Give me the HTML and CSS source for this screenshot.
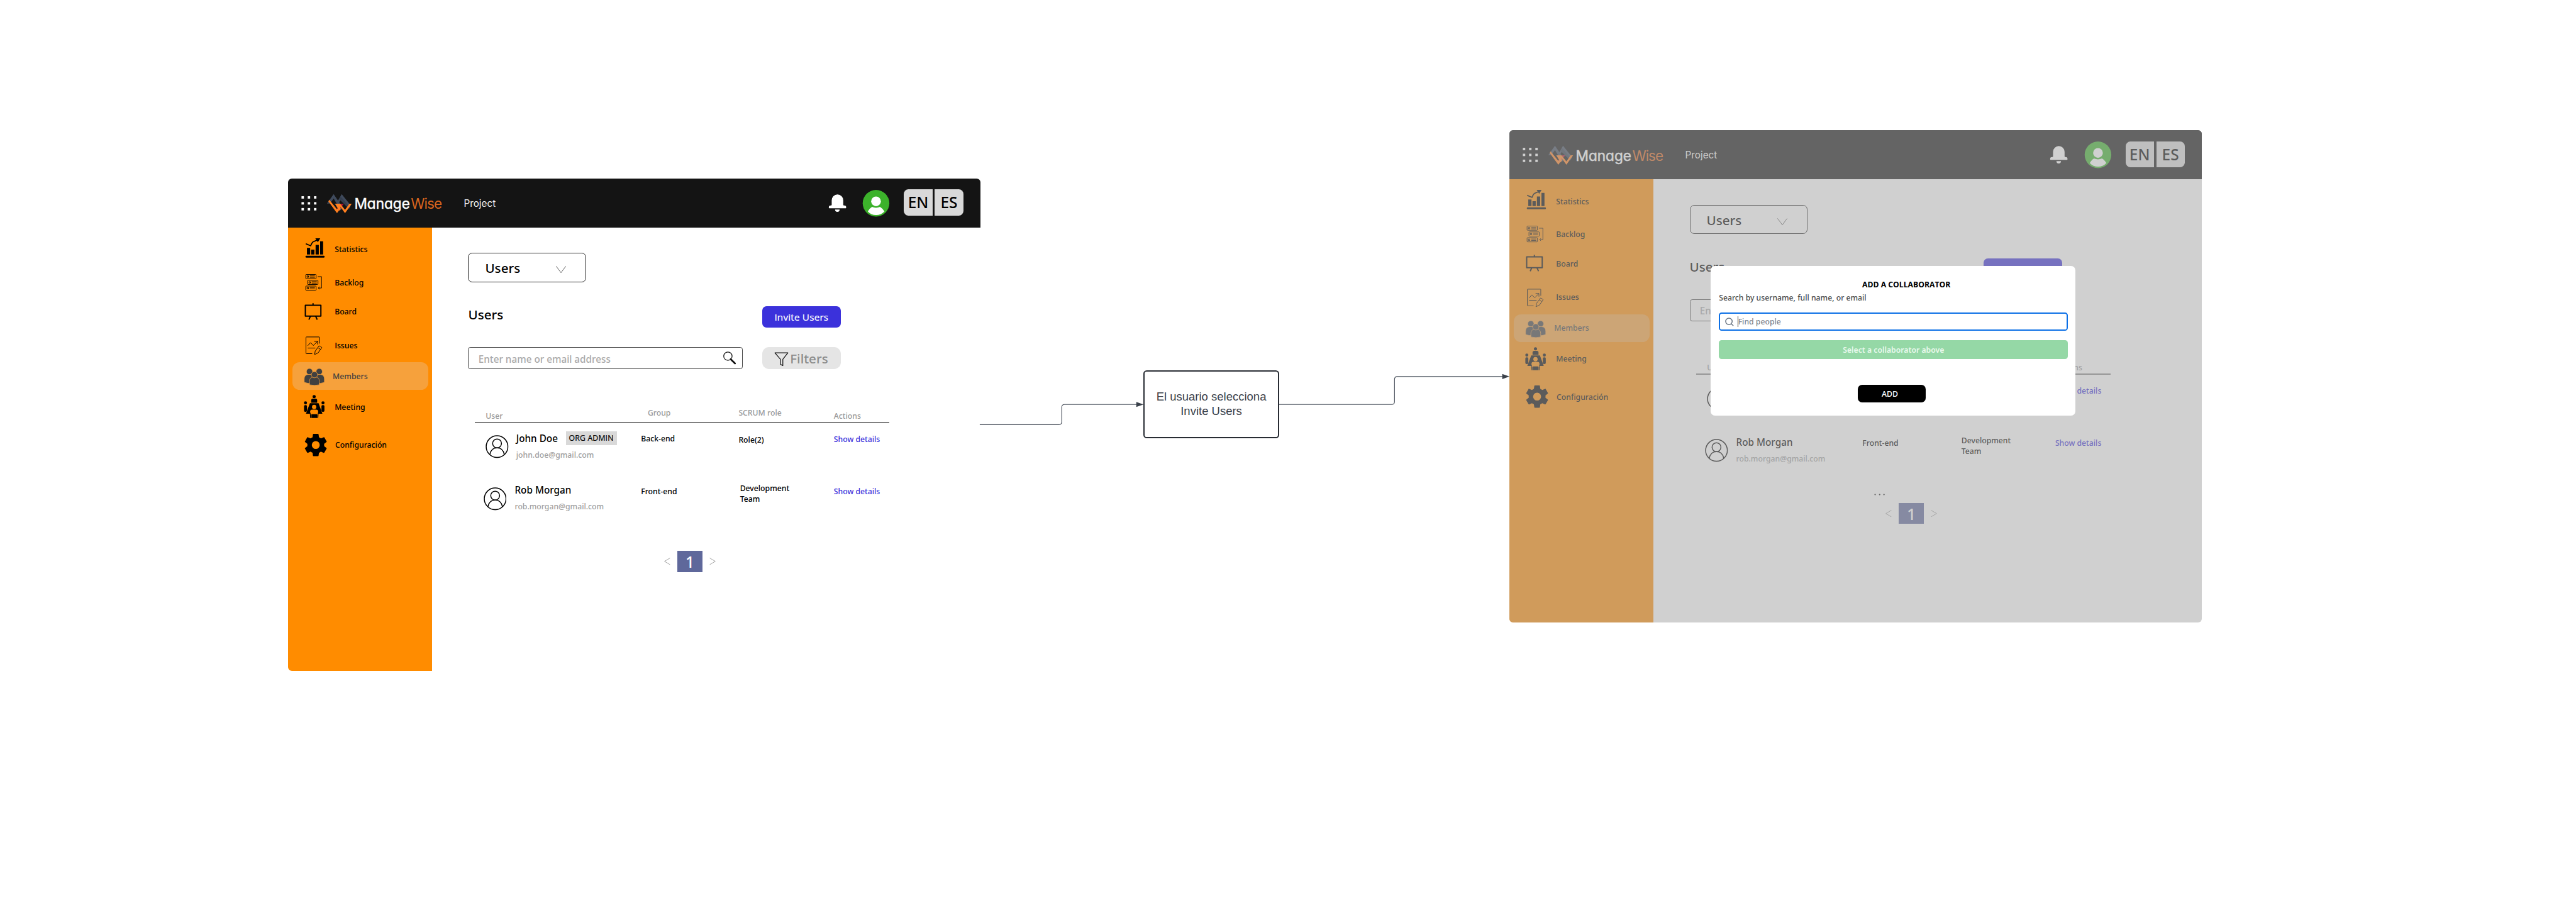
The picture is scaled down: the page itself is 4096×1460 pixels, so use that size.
FILE: index.html
```html
<!DOCTYPE html>
<html lang="es">
<head>
<meta charset="utf-8">
<title>ManageWise – Invite users flow</title>
<link rel="stylesheet" href="styles.css">
</head>
<body>
<svg class="defs" aria-hidden="true">
  <symbol id="i-dots" viewBox="0 0 74 102"><g fill="#fff"><rect x="28" y="36.7" width="5" height="5"/><rect x="41" y="36.7" width="5" height="5"/><rect x="54" y="36.7" width="5" height="5"/><rect x="28" y="49" width="5" height="5"/><rect x="41" y="49" width="5" height="5"/><rect x="54" y="49" width="5" height="5"/><rect x="28" y="61.3" width="5" height="5"/><rect x="41" y="61.3" width="5" height="5"/><rect x="54" y="61.3" width="5" height="5"/></g></symbol>
  <symbol id="i-mark" viewBox="74 0 64 102">
    <path fill="#3f4a5c" d="M80.3 52 94.3 32.3 113 60l-4 6L94.3 41.5 86.6 52z"/>
    <path fill="#3f4a5c" d="M101 50 111 32.3 130 56l-2.300 4.500L111 41 104 52z"/>
    <path fill="#343e4e" d="M105.500 42.500 109 37.500 128.500 60l-2.300 3z"/>
    <path fill="#b01638" d="M109.500 52.300h6L103.500 68l-3-4z"/>
    <path fill="#ff7f1f" d="M85.300 44 83.300 47.500 101.300 72 105.500 66 103 61.500 101.300 64z"/>
    <path fill="#ff7f1f" d="M97 52.300h11L118 65l9-12.700h5L118 72 107.500 57.500 109 63l-3 4z"/>
  </symbol>
  <symbol id="i-bell" viewBox="1115 0 60 102"><path fill="#fff" d="M1130 45a12 12 0 0 1 24 0v9.500q0 1 1.500 1.300l2.500.6q2 .5 2 2.400v2q0 1-1 1h-34q-1 0-1-1v-2q0-1.900 2-2.400l2.500-.6q1.500-.3 1.500-1.300zM1137 64.500h9.500a4.750 4.750 0 0 1-9.500 0z"/></symbol>
  <symbol id="i-user" viewBox="1175 0 106 102"><circle cx="1223.300" cy="51.300" r="27.700" fill="#3cb22b"/><circle cx="1223.300" cy="47.300" r="10.100" fill="#fff"/><path fill="#fff" d="M1206.200 68.200q3-5.500 8.800-9.200 8.300 3.400 16.600 0 5.800 3.700 9.200 9.200-7.500 7.800-17.400 7.800t-17.200-7.800z"/></symbol>
  <symbol id="i-stats" viewBox="0 121.800 90 52"><path d="M39.300 144.300H46V158h-6.700zM48 148h6.800v10H48zM57.300 138H64v20h-6.700zM66.700 130.700H73V158h-6.300zM56.700 124.300H67l-5 8.400z"/><path fill="none" stroke="currentColor" stroke-width="2.200" d="m37 135.700 10 4.300q2.500-6.500 5.500-8.500l9.500-4"/><rect x="36.300" y="160.700" width="39.700" height="4" rx="1.800"/></symbol>
  <symbol id="i-backlog" viewBox="0 196.500 90 40"><g fill="none" stroke="currentColor" stroke-width="1.200"><rect x="36.800" y="199.800" width="21.600" height="8.800" rx="1.200"/><rect x="40.700" y="211.900" width="21.600" height="8.800" rx="1.200"/><rect x="36.800" y="223.900" width="21.600" height="8.800" rx="1.200"/><path d="M39.600 202.700h3v3h-3zM43.500 214.800h3v3h-3zM39.600 226.800h3v3h-3zM45.300 202.700h10.500m-10.500 3h10.500m-6.600 9.100h10.500m-10.500 3h10.500m-14.400 9h10.500m-10.500 3h10.500M61.700 204.300h8V228h-7m3-2.500-2.800 2.500 2.800 2.500"/></g></symbol>
  <symbol id="i-board" viewBox="0 255.100 90 44"><path fill="none" stroke="currentColor" stroke-width="2.600" stroke-linejoin="round" d="M36 263.700h32.300v22.500H36zM52 259.500v4M46.500 286.500l-3.200 7M57.500 286.500l3.200 7"/></symbol>
  <symbol id="i-issues" viewBox="0 325.100 90 44"><g fill="none" stroke="currentColor" stroke-width="1.300" stroke-linejoin="round"><path d="M65.300 344v-13q0-.8-.8-.8H38.200q-.9 0-.9.900V364q0 1 1 1h12M41 348.500l5.700-6.500 6 6 8.600-8.600M54.500 339.200h7v6.500M41 353.300h15.700M55.300 366.700l1.200-7 8-11q3 .3 5.800 3.600l-7.800 11zM61.700 352l5.700 4"/></g></symbol>
  <symbol id="i-members" viewBox="9 383 81 57"><g stroke="#f6a13c" stroke-width="1"><circle cx="44.500" cy="402.500" r="6.500"/><circle cx="64.700" cy="402.500" r="6.500"/><path d="M33.500 425v-7q0-8.500 8-9.500h10v18q-10 2-18-1.500zM75.500 425v-7q0-8.500-8-9.500h-10v18q10 2 18-1.500z"/><path d="M44.500 430v-7q0-8 7-9h6.500q7 1 7 9v7q-10 2.500-20.500 0z"/><circle cx="54.800" cy="409" r="6.500"/></g></symbol>
  <symbol id="i-meeting" viewBox="0 449.500 90 52"><circle cx="54.300" cy="454.300" r="3.300"/><path d="M48.200 467v-5q0-3.300 3.300-3.300h5.800q3.300 0 3.300 3.300v5z"/><circle cx="36.300" cy="467.500" r="3.200"/><circle cx="72.700" cy="467.500" r="3.200"/><rect x="33.200" y="472" width="6.200" height="14" rx="2.500"/><rect x="69.500" y="472" width="6.200" height="14" rx="2.500"/><path d="M45.500 468h18l8 22H37.300z"/><g fill="#ff8c00"><circle cx="54.300" cy="476" r="4.500"/><path d="M46 492v-6.500q0-4 4-4h8.600q4 0 4 4v6.500z"/></g><path d="M48.700 491h11.500v8H48.700zM45.300 488h1.500v3.500l1.200.5v7h-2zM63.500 488H62v3.500l-1.200.5v7h2z"/></symbol>
  <symbol id="i-gear" viewBox="0 528.500 90 52"><path transform="translate(28.500 525.200) scale(2.430)" d="M19.140 12.940c.04-.3.060-.61.060-.94 0-.32-.02-.64-.07-.94l2.030-1.580c.18-.14.230-.41.120-.61l-1.920-3.320c-.12-.22-.37-.29-.59-.22l-2.390.96c-.5-.38-1.030-.7-1.620-.94L14.400 2.810c-.04-.24-.24-.41-.48-.41h-3.840c-.24 0-.43.170-.47.410L9.250 5.350C8.660 5.590 8.120 5.920 7.630 6.290L5.240 5.330c-.22-.08-.47 0-.59.220L2.740 8.870c-.12.210-.08.470.12.610l2.030 1.580C4.840 11.360 4.800 11.690 4.800 12s.02.640.07.940l-2.030 1.580c-.18.140-.23.410-.12.610l1.920 3.320c.12.220.37.290.59.220l2.390-.96c.5.380 1.030.7 1.620.94l.36 2.540c.05.240.24.410.48.410h3.840c.24 0 .44-.17.470-.41l.36-2.540c.59-.24 1.130-.56 1.620-.94l2.390.96c.22.080.47 0 .59-.22l1.920-3.320c.12-.22.070-.47-.12-.61zM12 15.400A3.400 3.400 0 1 1 12 8.600a3.400 3.400 0 0 1 0 6.800z"/></symbol>
  <symbol id="i-search" viewBox="0 0 28 28"><circle cx="9.700" cy="9.700" r="8.700" fill="none" stroke="#111" stroke-width="1.600"/><path d="m15.500 16 9 8.800" stroke="#111" stroke-width="3.600" stroke-linecap="round"/></symbol>
  <symbol id="i-funnel" viewBox="0 0 30 30"><path fill="none" stroke="#111" stroke-width="1.600" stroke-linejoin="round" d="M1.500 1.500h27L18 15v13l-5-2.500V15z"/></symbol>
  <symbol id="i-person" viewBox="0 0 48 48"><g fill="none" stroke="#000" stroke-width="2"><circle cx="24" cy="24" r="22.600"/><circle cx="24" cy="17.300" r="9.200"/><path d="M9 40.500Q11.500 26.600 24 26.600T39 40.500"/></g></symbol>
</svg>

<div class="canvas">
  <section class="screen screen-list">
    <header class="topbar">
      <svg class="ico-dots"><use href="#i-dots"/></svg>
      <svg class="ico-mark"><use href="#i-mark"/></svg>
      <span class="brand">Manage<span class="brand-accent">Wise</span></span>
      <span class="project">Project</span>
      <svg class="ico-bell"><use href="#i-bell"/></svg>
      <svg class="ico-user"><use href="#i-user"/></svg>
      <span class="lang lang-en">EN</span><span class="lang lang-es">ES</span>
    </header>
    <div class="body">
      <nav class="side">
        <a class="nav n-stats"><svg><use href="#i-stats"/></svg><span>Statistics</span></a>
        <a class="nav n-backlog"><svg><use href="#i-backlog"/></svg><span>Backlog</span></a>
        <a class="nav n-board"><svg><use href="#i-board"/></svg><span>Board</span></a>
        <a class="nav n-issues"><svg><use href="#i-issues"/></svg><span>Issues</span></a>
        <a class="nav n-members"><svg><use href="#i-members"/></svg><span>Members</span></a>
        <a class="nav n-meeting"><svg><use href="#i-meeting"/></svg><span>Meeting</span></a>
        <a class="nav n-config"><svg><use href="#i-gear"/></svg><span>Configuración</span></a>
      </nav>
      <main class="main">
        <div class="dropdown"><span>Users</span><svg viewBox="0 0 21 15"><path d="M.5.5l10 13.500 10-13.500"/></svg></div>
        <div class="title-row"><h1>Users</h1><span class="invite">Invite Users</span></div>
        <div class="search-row">
          <div class="search"><span>Enter name or email address</span><svg><use href="#i-search"/></svg></div>
          <div class="filters"><svg><use href="#i-funnel"/></svg><span>Filters</span></div>
        </div>
        <div class="table">
          <div class="thead"><span class="h-user">User</span><span class="h-group">Group</span><span class="h-role">SCRUM role</span><span class="h-actions">Actions</span></div>
          <div class="trow">
            <div class="who"><svg><use href="#i-person"/></svg><div class="id"><div class="name">John Doe <span class="badge">ORG ADMIN</span></div><div class="mail">john.doe@gmail.com</div></div></div>
            <span class="group">Back-end</span><span class="role">Role(2)</span><span class="show">Show details</span>
          </div>
          <div class="trow second">
            <div class="who"><svg><use href="#i-person"/></svg><div class="id"><div class="name">Rob Morgan</div><div class="mail">rob.morgan@gmail.com</div></div></div>
            <span class="group">Front-end</span><span class="role">Development<br>Team</span><span class="show">Show details</span>
          </div>
        </div>
        <div class="more"></div>
        <div class="pager"><svg viewBox="0 0 13 15"><path d="M12.300.7.800 7.500l11.500 6.800"/></svg><span class="page">1</span><svg viewBox="0 0 13 15"><path d="M.7.700l11.500 6.800L.7 14.300"/></svg></div>
      </main>
    </div>
  </section>

  <svg class="wires" viewBox="0 0 5357 1909">
    <g fill="none" stroke="#4a515c" stroke-width="1.500">
      <path d="M2037.500 883H2202q6 0 6-6V847q0-6 6-6H2364"/>
      <path d="M2660 841H2894q6 0 6-6V789q0-6 6-6H3125"/>
    </g>
    <path fill="#3a414a" d="M2363 835.700 2378 841 2363 846.300zM3124 777.700 3139 783 3124 788.300z"/>
  </svg>

  <div class="step">El usuario selecciona<br>Invite Users</div>

  <section class="screen screen-add">
    <header class="topbar">
      <svg class="ico-dots"><use href="#i-dots"/></svg>
      <svg class="ico-mark"><use href="#i-mark"/></svg>
      <span class="brand">Manage<span class="brand-accent">Wise</span></span>
      <span class="project">Project</span>
      <svg class="ico-bell"><use href="#i-bell"/></svg>
      <svg class="ico-user"><use href="#i-user"/></svg>
      <span class="lang lang-en">EN</span><span class="lang lang-es">ES</span>
    </header>
    <div class="body">
      <nav class="side">
        <a class="nav n-stats"><svg><use href="#i-stats"/></svg><span>Statistics</span></a>
        <a class="nav n-backlog"><svg><use href="#i-backlog"/></svg><span>Backlog</span></a>
        <a class="nav n-board"><svg><use href="#i-board"/></svg><span>Board</span></a>
        <a class="nav n-issues"><svg><use href="#i-issues"/></svg><span>Issues</span></a>
        <a class="nav n-members"><svg><use href="#i-members"/></svg><span>Members</span></a>
        <a class="nav n-meeting"><svg><use href="#i-meeting"/></svg><span>Meeting</span></a>
        <a class="nav n-config"><svg><use href="#i-gear"/></svg><span>Configuración</span></a>
      </nav>
      <main class="main">
        <div class="dropdown"><span>Users</span><svg viewBox="0 0 21 15"><path d="M.5.5l10 13.500 10-13.500"/></svg></div>
        <div class="title-row"><h1>Users</h1><span class="invite">Invite Users</span></div>
        <div class="search-row">
          <div class="search"><span>Enter name or email address</span></div>
        </div>
        <div class="table">
          <div class="thead"><span class="h-user">User</span><span class="h-group"></span><span class="h-role"></span><span class="h-actions">Actions</span></div>
          <div class="trow">
            <div class="who"><svg><use href="#i-person"/></svg></div>
            <span class="group"></span><span class="role"></span><span class="show">Show details</span>
          </div>
          <div class="trow second">
            <div class="who"><svg><use href="#i-person"/></svg><div class="id"><div class="name">Rob Morgan</div><div class="mail">rob.morgan@gmail.com</div></div></div>
            <span class="group">Front-end</span><span class="role">Development<br>Team</span><span class="show">Show details</span>
          </div>
        </div>
        <div class="more"><svg viewBox="0 0 24 4"><circle cx="2" cy="2" r="1.500"/><circle cx="11.500" cy="2" r="1.500"/><circle cx="20.500" cy="2" r="1.500"/></svg></div>
        <div class="pager"><svg viewBox="0 0 13 15"><path d="M12.300.7.800 7.500l11.500 6.800"/></svg><span class="page">1</span><svg viewBox="0 0 13 15"><path d="M.7.700l11.500 6.800L.7 14.300"/></svg></div>
      </main>
    </div>
    <div class="shade"></div>
    <div class="modal">
      <h2>ADD A COLLABORATOR</h2>
      <p>Search by username, full name, or email</p>
      <div class="find"><svg viewBox="0 0 18 18"><circle cx="8" cy="8" r="6.800"/><path d="m13 13 4.300 4.300"/></svg><i class="caret"></i><span>Find people</span></div>
      <div class="select">Select a collaborator above</div>
      <div class="add">ADD</div>
    </div>
  </section>
</div>
</body>
</html>
```
FILE: styles.css
```css
/* 1rem = 10 design pixels */
html { font-size: 7.6461px; background: #fff; }
body { margin: 0; font-family: "Noto Sans", "Open Sans", sans-serif; font-size: 1.6rem; line-height: 2.2rem; color: #000; }
h1, h2, p { margin: 0; font-weight: inherit; }
svg { display: block; flex: none; }
.defs { position: absolute; width: 0; height: 0; }
.canvas { position: relative; width: 4096px; height: 1460px; overflow: hidden; background: #fff; }

.screen { position: absolute; width: 144rem; height: 102.4rem; display: flex; flex-direction: column; border-radius: .8rem; overflow: hidden; background: #fff; font-weight: 500; white-space: nowrap; }
.screen-list { left: 59.9rem; top: 37.1rem; }
.screen-add { left: 313.9rem; top: 27.1rem; }
.wires { position: absolute; left: 0; top: 0; width: 4096px; height: 1460px; }

/* Top bar */
.topbar { flex: none; height: 10.2rem; display: flex; align-items: center; background: #141414; color: #fff; }
.ico-dots { width: 7.4rem; height: 10.2rem; }
.ico-mark { width: 6.4rem; height: 10.2rem; }
.ico-bell { width: 6rem; height: 10.2rem; }
.ico-user { width: 10.6rem; height: 10.2rem; }
.brand { width: 22.7rem; padding-top: .3rem; font: 400 2.95rem/3.6rem Inter, sans-serif; font-feature-settings: "cv11"; -webkit-text-stroke: .06rem currentColor; }
.brand-accent { color: #d9641e; margin-left: .2rem; letter-spacing: -.13rem; -webkit-text-stroke-width: 0; }
.project { flex: 1; padding-top: .3rem; font: 400 2rem/2.6rem Inter, sans-serif; color: #f0f0f0; }
.project { margin-left: .05rem; }
.lang { width: 5.9rem; height: 5.4rem; line-height: 5.5rem; text-align: center; font-size: 3.2rem; background: #d9d9d9; color: #000; margin-top: -.2rem; }
.lang-en { border-radius: 1rem 0 0 1rem; margin-right: .5rem; }
.lang-es { border-radius: 0 1rem 1rem 0; margin-right: 3.6rem; }

.body { flex: 1; display: flex; }

/* Sidebar */
.side { flex: none; width: 30rem; display: flex; flex-direction: column; background: #ff8c00; }
.nav { display: flex; align-items: center; color: #000; fill: currentColor; }
.nav svg { width: 9rem; height: 100%; }
.nav span { margin-left: .7rem; padding-top: .25rem; }
.n-stats { height: 5.2rem; margin-top: 1.98rem; }
.n-backlog { height: 4rem; margin-top: 2.27rem; }
.n-board { height: 4.4rem; margin-top: 1.86rem; }
.n-issues { height: 4.4rem; margin-top: 2.6rem; }
.n-issues span { font-family: "Open Sans"; font-weight: 600; }
.n-members { height: 5.7rem; margin: 1.39rem .9rem 0; border-radius: 1.5rem; background: #f6a13c; color: #404040; }
.n-members svg { width: 8.1rem; }
.n-members span { margin-left: .3rem; }
.n-meeting { height: 5.2rem; margin-top: .95rem; }
.n-config { height: 5.2rem; margin-top: 2.7rem; }
.n-config span { margin-left: .8rem; }

/* Content */
.main { flex: 1; display: flex; flex-direction: column; padding-left: 7.46rem; }
.dropdown { box-sizing: border-box; width: 24.5rem; height: 6.1rem; margin-top: 5.3rem; padding: .3rem 4rem 0 3.4rem; display: flex; align-items: center; justify-content: space-between; border: 1px solid #222; border-radius: .9rem; font-size: 2.7rem; }
.dropdown svg { width: 2.1rem; height: 1.5rem; margin-top: .6rem; fill: none; stroke: #333; stroke-width: 1; }
.title-row { margin-top: 5rem; height: 4.4rem; display: flex; align-items: center; }
.title-row h1 { width: 61.14rem; padding-bottom: .85rem; font-size: 2.7rem; }
.invite { width: 16.35rem; height: 4.4rem; line-height: 4.6rem; border-radius: .9rem; background: #3b31db; color: #fff; text-align: center; font-family: "Open Sans"; font-size: 2rem; letter-spacing: .025rem; -webkit-text-stroke: .03rem currentColor; }
.search-row { margin-top: 4.1rem; height: 4.6rem; display: flex; }
.search { box-sizing: border-box; width: 57.1rem; display: flex; align-items: center; justify-content: space-between; padding: .4rem 1.1rem 0 2rem; border: 1px solid #444; border-radius: .5rem; color: #aaa; font-size: 2rem; }
.search svg { width: 2.8rem; height: 2.8rem; margin-top: -.4rem; }
.filters { width: 16.35rem; margin-left: 4.04rem; display: flex; align-items: center; border-radius: 1.4rem; background: #e5e5e5; color: #8c8c8c; font-size: 2.7rem; }
.filters svg { width: 3rem; height: 3rem; margin: .5rem .3rem 0 2.5rem; }
.filters span { padding-top: .25rem; }

/* Table */
.table { margin: 7.9rem 0 0 1.34rem; width: 86.2rem; }
.thead { height: 3rem; display: grid; grid-template-columns: 34.6rem 20.3rem 19.8rem 1fr; border-bottom: 2px solid #808080; color: #999; }
.h-user { padding: .8rem 0 0 2.3rem; }
.h-group { padding: .2rem 0 0 1.4rem; }
.h-role { padding-top: .2rem; }
.h-actions { padding-top: .8rem; }
.trow { height: 10.8rem; display: grid; grid-template-columns: 34.6rem 20.3rem 19.8rem 1fr; }
.who { display: flex; padding: 1.75rem 0 0 2.25rem; }
.who svg { width: 4.8rem; height: 4.8rem; margin-top: .85rem; }
.id { margin-left: 1.6rem; }
.name { display: flex; align-items: center; height: 3rem; font-size: 2rem; }
.badge { margin-left: 1.65rem; width: 10.6rem; height: 2.9rem; line-height: 3rem; text-align: center; background: #d9d9d9; font-family: "Open Sans"; font-size: 1.6rem; letter-spacing: .025rem; -webkit-text-stroke: .03rem currentColor; }
.mail { margin-top: .9rem; color: #a0a0a0; }
.group { padding-top: 2.3rem; }
.role { padding-top: 2.6rem; }
.show { padding-top: 2.4rem; color: #3b31db; }
.second .who { padding-left: 1.85rem; }
.second .id { margin-left: 1.7rem; }
.second .group, .second .show { padding-top: 2.45rem; }
.second .role { padding: 1.85rem 0 0 .3rem; }

.more { height: 5.05rem; }
.more svg { width: 2.4rem; height: .4rem; margin: 3.1rem 0 0 38.4rem; fill: #222; }
.pager { display: flex; align-items: center; margin-left: 40.8rem; }
.pager svg { width: 1.3rem; height: 1.5rem; fill: none; stroke: #999; stroke-width: 1.2; }
.page { width: 5.25rem; height: 4.4rem; line-height: 4.6rem; margin: 0 1.4rem; background: #5f689b; color: #fff; text-align: center; font-size: 3.2rem; }

/* Flow step */
.step { position: absolute; left: 237.8rem; top: 77rem; box-sizing: border-box; width: 28.2rem; height: 14.2rem; display: flex; align-items: center; justify-content: center; text-align: center; border: 2px solid #282c33; border-radius: .7rem; background: #fff; color: #3a414a; font: 2.42rem/2.97rem "Liberation Sans", Arial, sans-serif; }

/* Collaborator dialog */
.shade { position: absolute; inset: 0; background: rgba(168, 168, 168, .54); }
.modal { position: absolute; left: 41.88rem; top: 28.2rem; box-sizing: border-box; width: 75.8rem; height: 31.2rem; padding: 2.9rem 1.5rem 0 1.68rem; display: flex; flex-direction: column; align-items: stretch; border-radius: .9rem; background: #fff; }
.modal h2 { margin-left: 29.8rem; font-size: 1.6rem; font-weight: 700; font-family: "Open Sans"; }
.modal p { margin-top: .6rem; color: #4d4d4d; }
.find { box-sizing: border-box; height: 3.85rem; margin-top: 1.75rem; display: flex; align-items: center; padding-left: 1rem; border: 2px solid #0b6fe6; border-radius: .6rem; color: #7f868f; }
.find svg { width: 1.8rem; height: 1.8rem; margin-top: .2rem; fill: none; stroke: #6b7684; stroke-width: 2; }
.find span { padding-top: .3rem; }
.caret { width: 1px; height: 2.3rem; margin-left: .8rem; background: #333; }
.select { height: 3.9rem; line-height: 4.1rem; margin-top: 1.93rem; border-radius: .6rem; background: #95d8a6; color: #e9f8ec; text-align: center; font-weight: 600; }
.add { box-sizing: border-box; width: 14.1rem; height: 3.55rem; line-height: 3.8rem; margin: 5.47rem 0 0 28.9rem; padding-right: .8rem; border-radius: .9rem; background: #000; color: #fff; text-align: center; }
```
